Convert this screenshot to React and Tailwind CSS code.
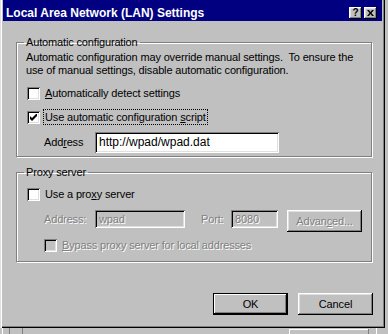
import React from "react";

const sunken =
  "shadow-[inset_1px_1px_0_#808080,inset_-1px_-1px_0_#fff,inset_2px_2px_0_#000,inset_-2px_-2px_0_#dfdfdf]";
const raised =
  "shadow-[inset_-1px_-1px_0_#000,inset_1px_1px_0_#fff,inset_-2px_-2px_0_#808080,inset_2px_2px_0_#dfdfdf]";
const groupBox =
  "border border-[#808080] shadow-[1px_1px_0_#fff,inset_1px_1px_0_#fff] m-0 p-0 min-w-0";
const dim = "text-[#808080] [text-shadow:1px_1px_0_#fff]";

function Check({ checked, disabled }) {
  return (
    <span
      className={`inline-flex items-center justify-center w-[13px] h-[13px] shrink-0 ${sunken} ${
        disabled ? "bg-[#c0c0c0]" : "bg-white"
      }`}
    >
      {checked && (
        <svg width="7" height="7" viewBox="0 0 7 7">
          <path d="M0 2v3l2 2 5-5V-1L2 4z" fill="#000" />
        </svg>
      )}
    </span>
  );
}

function Button({ label, isDefault, disabled, className = "" }) {
  return (
    <div
      className={`flex items-center justify-center h-[22px] w-[75px] bg-[#c0c0c0] ${
        isDefault
          ? "border border-black shadow-[inset_-1px_-1px_0_#000,inset_1px_1px_0_#fff,inset_-2px_-2px_0_#808080]"
          : raised
      } ${disabled ? dim : ""} ${className}`}
    >
      {label}
    </div>
  );
}

export default function App() {
  return (
    <div
      className="w-[388px] h-[334px] bg-[#c0c0c0] overflow-hidden text-black text-[11px] leading-[13px] tracking-[-0.15px]"
      style={{ fontFamily: '"Liberation Sans", Arial, sans-serif' }}
    >
      <div className="w-[385px] h-[328px] px-[3px] shadow-[inset_1px_0_0_#dfdfdf,inset_2px_0_0_#fff,inset_-1px_-1px_0_#000,inset_-2px_-2px_0_#808080]">
        {/* title bar */}
        <div className="h-[21px] bg-[#000080] flex items-start pt-[6px] pl-[3px] pr-[5px]">
          <span className="text-white font-bold text-[12px] leading-[14px] tracking-normal">
            Local Area Network (LAN) Settings
          </span>
          <div className="ml-auto flex gap-[2px] pt-[1px]">
            <div className={`w-[13px] h-[12px] bg-[#c0c0c0] ${raised} flex items-center justify-center font-bold text-[10px] leading-none`}>
              ?
            </div>
            <div className={`w-[13px] h-[12px] bg-[#c0c0c0] ${raised} flex items-center justify-center`}>
              <svg width="7" height="6" viewBox="0 0 7 6">
                <path d="M0 0h2l1.5 2L5 0h2L4.5 3 7 6H5L3.5 4 2 6H0l2.5-3z" fill="#000" />
              </svg>
            </div>
          </div>
        </div>

        {/* automatic configuration */}
        <fieldset className={`${groupBox} ml-[13px] mt-[15px] w-[356px] h-[121px]`}>
          <legend className="ml-[7px] px-[2px]">Automatic configuration</legend>
          <div className="pl-[9px]">
            <p className="mt-[2px]">
              Automatic configuration may override manual settings.&nbsp; To ensure the
              <br />
              use of manual settings, disable automatic configuration.
            </p>
            <div className="flex items-center mt-[10px] ml-[1px] gap-[5px]">
              <Check />
              <span>
                <u>A</u>utomatically detect settings
              </span>
            </div>
            <div className="flex items-center mt-[9px] ml-[1px] gap-[3px]">
              <Check checked />
              <span className="border border-dotted border-black px-[1px] py-[1px] leading-[12px]">
                Use automatic configuration <u>s</u>cript
              </span>
            </div>
            <div className="flex items-center mt-[7px] ml-[18px]">
              <span className="w-[51px]">
                Add<u>r</u>ess
              </span>
              <div className={`w-[184px] h-[21px] bg-white ${sunken} flex items-center pl-[4px] text-[12px] tracking-normal`}>
                http://wpad/wpad.dat
              </div>
            </div>
          </div>
        </fieldset>

        {/* proxy server */}
        <fieldset className={`${groupBox} ml-[13px] mt-[9px] w-[356px] h-[96px]`}>
          <legend className="ml-[7px] px-[2px]">Proxy server</legend>
          <div className="pl-[9px]">
            <div className="flex items-center mt-[9px] ml-[1px] gap-[5px]">
              <Check />
              <span>
                Use a pro<u>x</u>y server
              </span>
            </div>
            <div className="flex items-start mt-[9px] ml-[18px]">
              <span className={`w-[51px] h-[18px] flex items-center ${dim}`}>Address:</span>
              <div className={`w-[90px] h-[18px] ${sunken} flex items-center pl-[4px] ${dim}`}>
                wpad
              </div>
              <span className={`ml-[16px] w-[30px] h-[18px] flex items-center ${dim}`}>Port:</span>
              <div className={`w-[47px] h-[18px] ${sunken} flex items-center pl-[4px] ${dim}`}>
                8080
              </div>
              <Button
                label={
                  <span>
                    Advan<u>c</u>ed...
                  </span>
                }
                disabled
                className="ml-[9px]"
              />
            </div>
            <div className="flex items-center mt-[7px] ml-[18px] gap-[5px]">
              <Check disabled />
              <span className={dim}>
                <u>B</u>ypass proxy server for local addresses
              </span>
            </div>
          </div>
        </fieldset>

        <div className="flex justify-end gap-[10px] mt-[31px] pr-[9px]">
          <Button label="OK" isDefault />
          <Button label="Cancel" />
        </div>
      </div>

      {/* window behind */}
      <div className="relative h-[6px]">
        <div className="absolute left-[2px] top-0 w-[1px] h-[6px] bg-white" />
        <div className="absolute left-[9px] top-0 w-[1px] h-[6px] bg-[#808080]" />
        <div className="absolute left-[22px] top-0 w-[1px] h-[6px] bg-[#808080]" />
        <div className="absolute left-[289px] top-[1px] w-[80px] h-[1px] bg-white" />
        <div className="absolute left-[289px] top-[1px] w-[1px] h-[5px] bg-white" />
        <div className="absolute left-[368px] top-[1px] w-[1px] h-[5px] bg-[#808080]" />
        <div className="absolute left-[376px] top-0 w-[1px] h-[6px] bg-white" />
      </div>
    </div>
  );
}
